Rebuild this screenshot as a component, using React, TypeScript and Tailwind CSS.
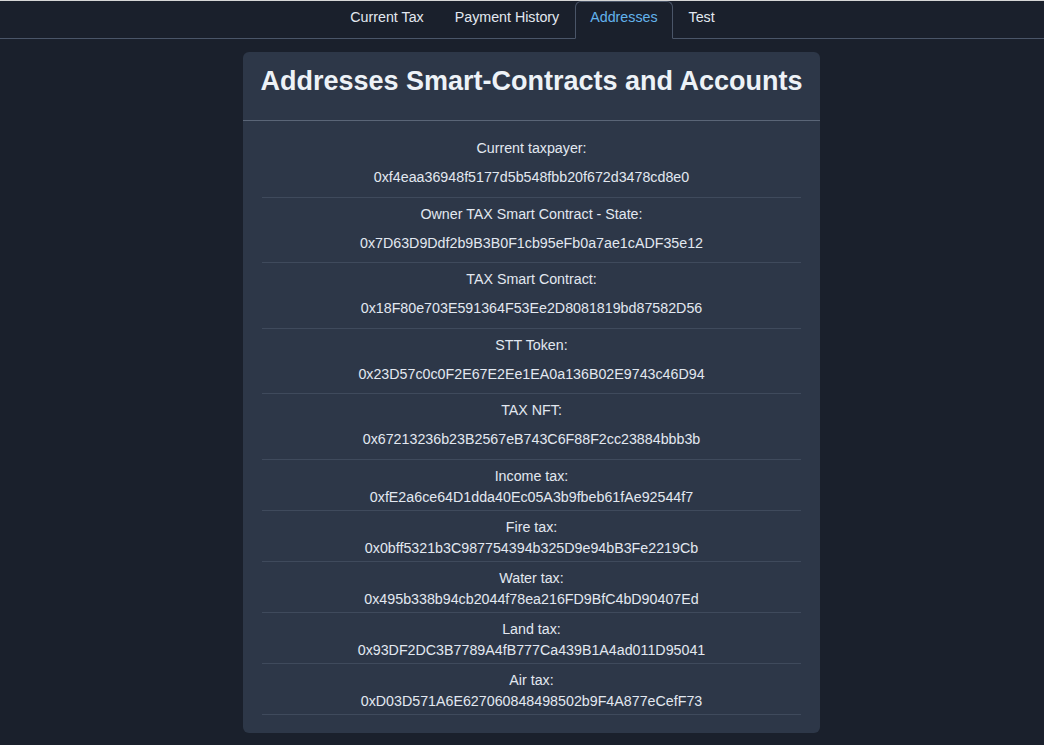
import React from "react";

const tabs = ["Current Tax", "Payment History", "Addresses", "Test"];

const mainAddresses = [
  { label: "Current taxpayer:", value: "0xf4eaa36948f5177d5b548fbb20f672d3478cd8e0" },
  { label: "Owner TAX Smart Contract - State:", value: "0x7D63D9Ddf2b9B3B0F1cb95eFb0a7ae1cADF35e12" },
  { label: "TAX Smart Contract:", value: "0x18F80e703E591364F53Ee2D8081819bd87582D56" },
  { label: "STT Token:", value: "0x23D57c0c0F2E67E2Ee1EA0a136B02E9743c46D94" },
  { label: "TAX NFT:", value: "0x67213236b23B2567eB743C6F88F2cc23884bbb3b" },
];

const taxAddresses = [
  { label: "Income tax:", value: "0xfE2a6ce64D1dda40Ec05A3b9fbeb61fAe92544f7" },
  { label: "Fire tax:", value: "0x0bff5321b3C987754394b325D9e94bB3Fe2219Cb" },
  { label: "Water tax:", value: "0x495b338b94cb2044f78ea216FD9BfC4bD90407Ed" },
  { label: "Land tax:", value: "0x93DF2DC3B7789A4fB777Ca439B1A4ad011D95041" },
  { label: "Air tax:", value: "0xD03D571A6E627060848498502b9F4A877eCefF73" },
];

const App = () => {
  return (
    <div className="min-h-[745px] bg-[#1a202c] border-t border-[#d6d6d6] font-['Liberation_Sans',Arial,sans-serif] text-[#e2e8f0]">
      {/* tabs */}
      <div className="flex justify-center pl-[21px] border-b border-[#4a5568]">
        {tabs.map((t) => (
          <div
            key={t}
            className={
              t === "Addresses"
                ? "-mb-px px-[14.5px] pt-[5px] pb-[10px] text-[14.25px] leading-[21px] text-[#63b3ed] bg-[#1a202c] border border-[#4a5568] border-b-[#1a202c] rounded-t-md"
                : "-mb-px px-[14.5px] pt-[5px] pb-[10px] text-[14.25px] leading-[21px] border border-transparent"
            }
          >
            {t}
          </div>
        ))}
      </div>

      <div className="flex justify-center pl-[19px] pt-[13px] pb-[13px]">
        <div className="w-[577px] bg-[#2d3748] rounded-md">
          <div className="border-b border-[#5a6577] pt-[13px] pb-[23px] text-center">
            <h3 className="text-[27px] font-bold leading-[32px] text-[#edf2f7]">
              Addresses Smart-Contracts and Accounts
            </h3>
          </div>
          <div className="px-[19px] pt-[11px] pb-[18px] text-[14.25px] text-center">
            {mainAddresses.map((a) => (
              <div key={a.label} className="flex flex-col gap-2 pt-[6px] pb-[8.5px] border-b border-[#3f4a5c]">
                <div className="leading-[21px]">{a.label}</div>
                <div className="leading-[21px]">{a.value}</div>
              </div>
            ))}
            {taxAddresses.map((a) => (
              <div key={a.label} className="flex flex-col pt-[6px] pb-[2px] border-b border-[#3f4a5c]">
                <div className="leading-[21px]">{a.label}</div>
                <div className="leading-[21px]">{a.value}</div>
              </div>
            ))}
          </div>
        </div>
      </div>
    </div>
  );
};

export default App;
